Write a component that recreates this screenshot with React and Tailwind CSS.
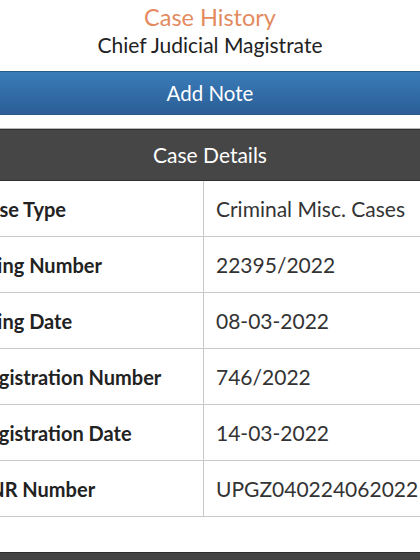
import React from "react";

const rows = [
  ["Case Type", "Criminal Misc. Cases"],
  ["Filing Number", "22395/2022"],
  ["Filing Date", "08-03-2022"],
  ["Registration Number", "746/2022"],
  ["Registration Date", "14-03-2022"],
  ["CNR Number", "UPGZ040224062022"],
];

export default function App() {
  return (
    <div className="w-[420px] h-[560px] overflow-hidden bg-white font-['Lato',sans-serif]">
      <div className="pt-[3px] text-center">
        <div className="text-[23.5px] leading-[28px] text-[#e38b5f]">Case History</div>
        <div className="text-[21px] leading-[28px] text-[#222]">Chief Judicial Magistrate</div>
      </div>
      <div className="mt-[12px] h-[44px] flex items-center justify-center border-y border-[#2c5a86] bg-gradient-to-b from-[#3a7cba] to-[#2b5e95] text-[20.5px] text-white">
        Add Note
      </div>
      <div className="mt-[13px] border-t border-[#b8b8b8]">
        <div className="h-[52px] flex items-center justify-center border-y border-[#2e2e2e] bg-[#464646] text-[21px] text-white">
          Case Details
        </div>
      </div>
      <div className="ml-[-37px] w-[494px] grid grid-cols-[241px_253px]">
        {rows.map(([k, v]) => (
          <React.Fragment key={k}>
            <div className="h-[56px] flex items-center pl-[13px] border-b border-r border-[#c8c8c8] text-[20px] font-bold text-[#222] whitespace-nowrap">
              {k}
            </div>
            <div className="h-[56px] flex items-center pl-[12px] border-b border-[#c8c8c8] text-[21px] text-[#333] whitespace-nowrap">
              {v}
            </div>
          </React.Fragment>
        ))}
      </div>
      <div className="mt-[35px] h-[20px] border-t border-[#2e2e2e] bg-[#444]"></div>
    </div>
  );
}
